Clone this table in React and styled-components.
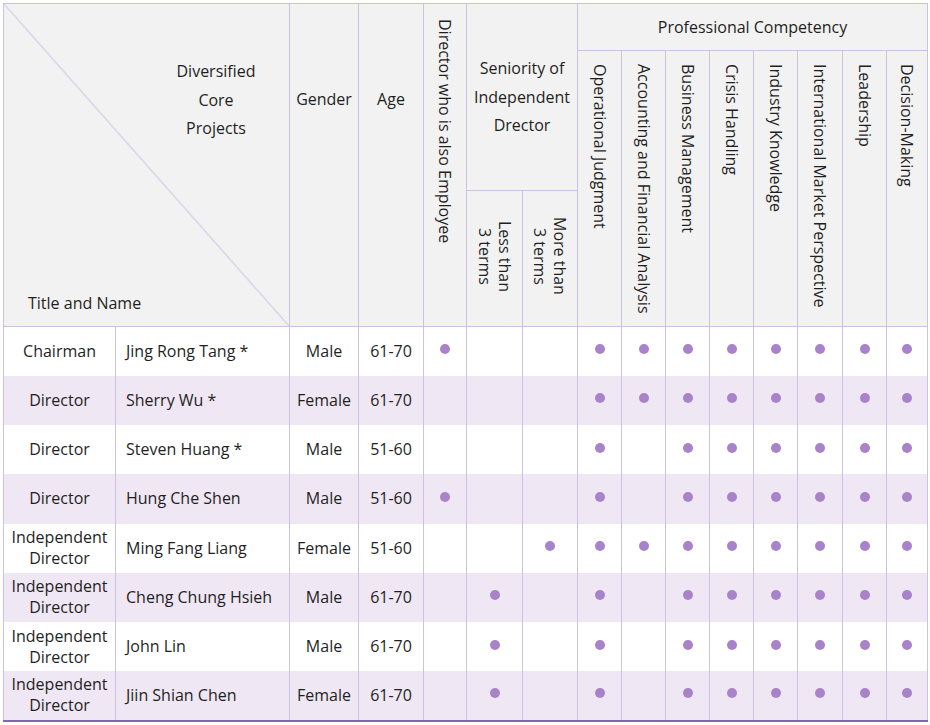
import styled, { createGlobalStyle } from "styled-components";

const GlobalStyle = createGlobalStyle`
  body {
    margin: 0;
    background: #ffffff;
    font-family: "Open Sans", "Noto Sans", sans-serif;
  }
`;

const competencies = [
  "Operational Judgment",
  "Accounting and Financial Analysis",
  "Business Management",
  "Crisis Handling",
  "Industry Knowledge",
  "International Market Perspective",
  "Leadership",
  "Decision-Making",
];

const ALL = [1, 1, 1, 1, 1, 1, 1, 1];
const NO_ACC = [1, 0, 1, 1, 1, 1, 1, 1];

const directors = [
  { title: "Chairman", name: "Jing Rong Tang *", gender: "Male", age: "61-70", employee: true, skills: ALL },
  { title: "Director", name: "Sherry Wu *", gender: "Female", age: "61-70", skills: ALL },
  { title: "Director", name: "Steven Huang *", gender: "Male", age: "51-60", skills: NO_ACC },
  { title: "Director", name: "Hung Che Shen", gender: "Male", age: "51-60", employee: true, skills: NO_ACC },
  { title: "Independent Director", name: "Ming Fang Liang", gender: "Female", age: "51-60", more: true, skills: ALL },
  { title: "Independent Director", name: "Cheng Chung Hsieh", gender: "Male", age: "61-70", less: true, skills: NO_ACC },
  { title: "Independent Director", name: "John Lin", gender: "Male", age: "61-70", less: true, skills: NO_ACC },
  { title: "Independent Director", name: "Jiin Shian Chen", gender: "Female", age: "61-70", less: true, skills: NO_ACC },
];

const colWidths = [112, 174, 69, 65, 43, 56, 55, 44, 44, 44, 44, 44, 45, 44, 41];

function App() {
  return (
    <>
      <GlobalStyle />
      <Page>
        <Table>
          <colgroup>
            {colWidths.map((w, i) => (
              <col key={i} style={{ width: w }} />
            ))}
          </colgroup>
          <thead>
            <HeadRow $height={47}>
              <CornerCell colSpan={2} rowSpan={3}>
                <CornerBox>
                  <CornerTop>
                    <div>Diversified</div>
                    <div>Core</div>
                    <div>Projects</div>
                  </CornerTop>
                  <CornerBottom>Title and Name</CornerBottom>
                </CornerBox>
              </CornerCell>
              <HeadCell rowSpan={3} $top={85}>Gender</HeadCell>
              <HeadCell rowSpan={3} $top={85}>Age</HeadCell>
              <HeadCell rowSpan={3} $top={15}>
                <VerticalLabel>Director who is also Employee</VerticalLabel>
              </HeadCell>
              <HeadCell colSpan={2} rowSpan={2} $lines>
                <div>Seniority of</div>
                <div>Independent</div>
                <div>Drector</div>
              </HeadCell>
              <HeadCell colSpan={8}>Professional Competency</HeadCell>
            </HeadRow>
            <HeadRow $height={139}>
              {competencies.map((c) => (
                <HeadCell key={c} rowSpan={2} $top={13}>
                  <VerticalLabel>{c}</VerticalLabel>
                </HeadCell>
              ))}
            </HeadRow>
            <HeadRow $height={136}>
              <HeadCell>
                <VerticalLabel>
                  Less than
                  <br />3 terms
                </VerticalLabel>
              </HeadCell>
              <HeadCell>
                <VerticalLabel>
                  More than
                  <br />3 terms
                </VerticalLabel>
              </HeadCell>
            </HeadRow>
          </thead>
          <tbody>
            {directors.map((d) => (
              <BodyRow key={d.name}>
                <BodyCell>{d.title}</BodyCell>
                <BodyCell $align="left">{d.name}</BodyCell>
                <BodyCell>{d.gender}</BodyCell>
                <BodyCell>{d.age}</BodyCell>
                <BodyCell>{d.employee && <Dot />}</BodyCell>
                <BodyCell>{d.less && <Dot />}</BodyCell>
                <BodyCell>{d.more && <Dot />}</BodyCell>
                {d.skills.map((s, i) => (
                  <BodyCell key={i}>{s ? <Dot /> : null}</BodyCell>
                ))}
              </BodyRow>
            ))}
          </tbody>
        </Table>
      </Page>
    </>
  );
}

const Page = styled.div`
  padding: 3px 0 0 3px;
`;

const Table = styled.table`
  border-collapse: collapse;
  table-layout: fixed;
  width: 925px;
  border-top: 1px solid #9a80c2;
  border-left: 1px solid #9a80c2;
  border-right: 1px solid #40206e;
  border-bottom: 2px solid #8266b0;
  font-size: 16px;
  color: #1f1f1f;
`;

const HeadRow = styled.tr`
  height: ${(p) => p.$height}px;
`;

const HeadCell = styled.th`
  background: #f2f2f2;
  border: 1px solid #cbc2e2;
  font-weight: normal;
  padding: ${(p) => (p.$top ? `${p.$top}px 0 0` : "0")};
  text-align: center;
  vertical-align: ${(p) => (p.$top ? "top" : "middle")};
  line-height: ${(p) => (p.$lines ? "28.5px" : "21px")};
`;

const CornerCell = styled.th`
  background: #f2f2f2 linear-gradient(
      to top right,
      transparent calc(50% - 0.8px),
      #c3b9de 50%,
      transparent calc(50% + 0.8px)
    );
  border: 1px solid #cbc2e2;
  font-weight: normal;
  padding: 0;
`;

const CornerBox = styled.div`
  height: 322px;
  display: flex;
  flex-direction: column;
  justify-content: space-between;
  padding: 53px 0 12px;
  box-sizing: border-box;
`;

const CornerTop = styled.div`
  align-self: flex-end;
  width: 146px;
  text-align: center;
  line-height: 28.5px;
`;

const CornerBottom = styled.div`
  text-align: left;
  padding-left: 24px;
  line-height: 21px;
`;

const VerticalLabel = styled.span`
  display: inline-block;
  writing-mode: vertical-rl;
  white-space: nowrap;
  line-height: 20px;
`;

const BodyRow = styled.tr`
  height: 49.25px;
  background: #ffffff;
  &:nth-child(even) {
    background: #efe7f3;
  }
`;

const BodyCell = styled.td`
  border-left: 1px solid #cbc2e2;
  border-right: 1px solid #cbc2e2;
  padding: ${(p) => (p.$align === "left" ? "0 4px 0 10px" : "0 1px")};
  text-align: ${(p) => p.$align || "center"};
  vertical-align: middle;
  line-height: 21px;
`;

const Dot = styled.span`
  display: block;
  width: 10px;
  height: 10px;
  margin: -4px auto 0;
  border-radius: 50%;
  background: #a983c9;
`;

export default App;
